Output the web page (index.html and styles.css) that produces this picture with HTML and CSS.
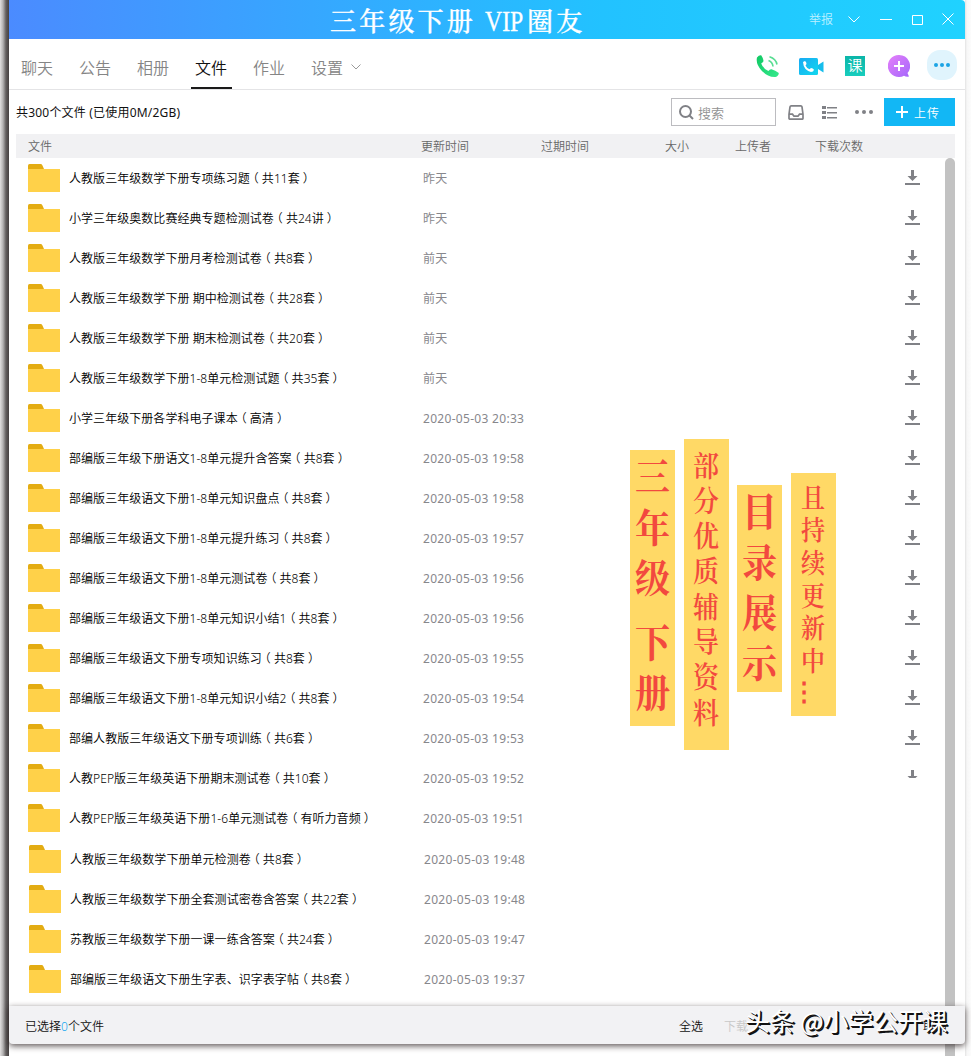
FILE: index.html
```html
<!DOCTYPE html>
<html lang="zh-CN">
<head>
    <meta charset="UTF-8">
    <meta name="viewport" content="width=device-width, initial-scale=1.0">
    <title>三年级下册 VIP圈友</title>
    <link rel="stylesheet" href="styles.css">
</head>
<body>
    <svg class="defs" width="0" height="0">
        <symbol id="folder" viewBox="0 0 32 28">
            <path fill="#e3ac13" d="M0 1.5Q0 0 1.5 0h11.2q1 0 1.5 1L16.500 6H0z"/>
            <path fill="#ffd149" d="M0 5h32v23H0z"/>
        </symbol>
        <symbol id="download" viewBox="0 0 15 15">
            <path fill="#808186" d="M6 0h3v6h3.500L7.500 11 2.500 6H6zM0 13h15v2H0z"/>
        </symbol>
    </svg>

    <div class="window">
        <header class="titlebar">
            <h1 class="title">三年级下册<span class="vip">VIP</span>圈友</h1>
            <div class="window-buttons">
                <span class="report">举报</span>
                <svg width="117" height="12" fill="none" stroke="#fff" stroke-width="1">
                    <path d="M.5 3.500l5.500 5.500 5.500-5.500M32 6.500h12M64.500 2.500h10v9h-10zM94.500 .500l11 11M105.500 .500l-11 11"/>
                </svg>
            </div>
        </header>

        <nav class="tabs">
            <span class="tab">聊天</span>
            <span class="tab">公告</span>
            <span class="tab">相册</span>
            <span class="tab active">文件</span>
            <span class="tab">作业</span>
            <span class="tab">设置
                <svg width="10" height="6" fill="none" stroke="#999"><path d="M.5 .5L5 5 9.500 .5"/></svg>
            </span>
            <div class="actions">
                <svg class="phone" width="24" height="24" viewBox="0 0 24 24">
                    <defs><linearGradient id="g1" x2="1" y2="1"><stop stop-color="#10c863"/><stop offset="1" stop-color="#35e98c"/></linearGradient></defs>
                    <path fill="url(#g1)" d="M1 3.500Q3 .8 5.200 1.200 7 3.500 7.500 7q-.2 1.200-2.300 2.500 2 5 7.200 7.500 1.600-2.200 3.100-1.800 3.800 1 7.300 3.800-.2 3-3.300 4Q12 23.500 5.500 16.500 -.5 10 1 3.500z"/>
                    <path fill="none" stroke="#58dd92" stroke-width="1.600" d="M12.500 6.500q4 1.500 4.500 6M13.500 2.700q6.500 2 7.500 7.800"/>
                </svg>
                <svg class="video" width="25" height="17" viewBox="0 0 25 17">
                    <defs><linearGradient id="g2" x2="1" y2="1"><stop stop-color="#18a9f3"/><stop offset="1" stop-color="#12d8ee"/></linearGradient></defs>
                    <rect width="19" height="17" rx="1.500" fill="url(#g2)"/>
                    <path fill="#16bdec" d="M19 7l5.500-3.500v11L19 11z"/>
                    <path fill="#fff" d="M4 4l2-1q1.500 1 1.500 3L6.500 7.500q1 2.500 4 3.700l1.500-1.200q2 .2 3 1.800-.5 2.200-3 2.200Q4.500 12 4 4z"/>
                </svg>
                <span class="lesson">课</span>
                <svg class="plus" width="22" height="22" viewBox="0 0 22 22">
                    <defs><linearGradient id="g3" x2="1" y2="1"><stop stop-color="#e580fa"/><stop offset="1" stop-color="#a466fb"/></linearGradient></defs>
                    <path fill="url(#g3)" d="M11 0a11 11 0 1 0 5 20.700Q18 22 21 21.500l-1.500-3.500A11 11 0 0 0 11 0z"/>
                    <path stroke="#fff" stroke-width="2" d="M6 11h10M11 6v10"/>
                </svg>
                <span class="more-round"><i></i><i></i><i></i></span>
            </div>
        </nav>

        <div class="toolbar">
            <span class="usage">共300个文件 (已使用0M/2GB)</span>
            <div class="search">
                <svg width="15" height="15" fill="none" stroke="#808186" stroke-width="2"><circle cx="6.500" cy="6.500" r="5.500"/><path d="M10.500 10.500l3.500 3.500"/></svg>
                <span>搜索</span>
            </div>
            <svg class="inbox" width="16" height="15" fill="none" stroke="#808186" stroke-width="1.700">
                <path d="M3.200 .9h9.600q1 0 1.200 1l1 7.300v4q0 1-1 1H2q-1 0-1-1v-4l1-7.300q.2-1 1.200-1zM1 9.200h3.500l1.500 2h4l1.500-2H15"/>
            </svg>
            <svg class="list-icon" width="16" height="13" fill="#808186">
                <path d="M0 0h4v3H0zM0 5h4v3H0zM0 10h4v3H0zM5 1h10v1.500H5zM5 6h10v1.500H5zM5 11h10v1.500H5z"/>
            </svg>
            <span class="more"><i></i><i></i><i></i></span>
            <button class="upload"><svg width="12" height="12" stroke="#fff" stroke-width="2"><path d="M0 6h12M6 0v12"/></svg><span>上传</span></button>
        </div>

        <div class="columns">
            <span>文件</span><span>更新时间</span><span>过期时间</span><span>大小</span><span>上传者</span><span>下载次数</span>
        </div>

        <div class="content">
            <ul class="files">
                <li><svg class="folder"><use href="#folder"/></svg><span class="name">人教版三年级数学下册专项练习题<b>（</b>共11套<b>）</b></span><span class="date">昨天</span><svg class="download"><use href="#download"/></svg></li>
                <li><svg class="folder"><use href="#folder"/></svg><span class="name">小学三年级奥数比赛经典专题检测试卷<b>（</b>共24讲<b>）</b></span><span class="date">昨天</span><svg class="download"><use href="#download"/></svg></li>
                <li><svg class="folder"><use href="#folder"/></svg><span class="name">人教版三年级数学下册月考检测试卷<b>（</b>共8套<b>）</b></span><span class="date">前天</span><svg class="download"><use href="#download"/></svg></li>
                <li><svg class="folder"><use href="#folder"/></svg><span class="name">人教版三年级数学下册 期中检测试卷<b>（</b>共28套<b>）</b></span><span class="date">前天</span><svg class="download"><use href="#download"/></svg></li>
                <li><svg class="folder"><use href="#folder"/></svg><span class="name">人教版三年级数学下册 期末检测试卷<b>（</b>共20套<b>）</b></span><span class="date">前天</span><svg class="download"><use href="#download"/></svg></li>
                <li><svg class="folder"><use href="#folder"/></svg><span class="name">人教版三年级数学下册1-8单元检测试题<b>（</b>共35套<b>）</b></span><span class="date">前天</span><svg class="download"><use href="#download"/></svg></li>
                <li><svg class="folder"><use href="#folder"/></svg><span class="name">小学三年级下册各学科电子课本<b>（</b>高清<b>）</b></span><span class="date">2020-05-03 20:33</span><svg class="download"><use href="#download"/></svg></li>
                <li><svg class="folder"><use href="#folder"/></svg><span class="name">部编版三年级下册语文1-8单元提升含答案<b>（</b>共8套<b>）</b></span><span class="date">2020-05-03 19:58</span><svg class="download"><use href="#download"/></svg></li>
                <li><svg class="folder"><use href="#folder"/></svg><span class="name">部编版三年级语文下册1-8单元知识盘点<b>（</b>共8套<b>）</b></span><span class="date">2020-05-03 19:58</span><svg class="download"><use href="#download"/></svg></li>
                <li><svg class="folder"><use href="#folder"/></svg><span class="name">部编版三年级语文下册1-8单元提升练习<b>（</b>共8套<b>）</b></span><span class="date">2020-05-03 19:57</span><svg class="download"><use href="#download"/></svg></li>
                <li><svg class="folder"><use href="#folder"/></svg><span class="name">部编版三年级语文下册1-8单元测试卷<b>（</b>共8套<b>）</b></span><span class="date">2020-05-03 19:56</span><svg class="download"><use href="#download"/></svg></li>
                <li><svg class="folder"><use href="#folder"/></svg><span class="name">部编版三年级语文下册1-8单元知识小结1<b>（</b>共8套<b>）</b></span><span class="date">2020-05-03 19:56</span><svg class="download"><use href="#download"/></svg></li>
                <li><svg class="folder"><use href="#folder"/></svg><span class="name">部编版三年级语文下册专项知识练习<b>（</b>共8套<b>）</b></span><span class="date">2020-05-03 19:55</span><svg class="download"><use href="#download"/></svg></li>
                <li><svg class="folder"><use href="#folder"/></svg><span class="name">部编版三年级语文下册1-8单元知识小结2<b>（</b>共8套<b>）</b></span><span class="date">2020-05-03 19:54</span><svg class="download"><use href="#download"/></svg></li>
                <li><svg class="folder"><use href="#folder"/></svg><span class="name">部编人教版三年级语文下册专项训练<b>（</b>共6套<b>）</b></span><span class="date">2020-05-03 19:53</span><svg class="download"><use href="#download"/></svg></li>
                <li><svg class="folder"><use href="#folder"/></svg><span class="name">人教PEP版三年级英语下册期末测试卷<b>（</b>共10套<b>）</b></span><span class="date">2020-05-03 19:52</span><svg class="download clipped"><use href="#download"/></svg></li>
                <li><svg class="folder"><use href="#folder"/></svg><span class="name">人教PEP版三年级英语下册1-6单元测试卷<b>（</b>有听力音频<b>）</b></span><span class="date">2020-05-03 19:51</span></li>
                <li class="shifted first"><svg class="folder"><use href="#folder"/></svg><span class="name">人教版三年级数学下册单元检测卷<b>（</b>共8套<b>）</b></span><span class="date">2020-05-03 19:48</span></li>
                <li class="shifted"><svg class="folder"><use href="#folder"/></svg><span class="name">人教版三年级数学下册全套测试密卷含答案<b>（</b>共22套<b>）</b></span><span class="date">2020-05-03 19:48</span></li>
                <li class="shifted"><svg class="folder"><use href="#folder"/></svg><span class="name">苏教版三年级数学下册一课一练含答案<b>（</b>共24套<b>）</b></span><span class="date">2020-05-03 19:47</span></li>
                <li class="shifted"><svg class="folder"><use href="#folder"/></svg><span class="name">部编版三年级语文下册生字表、识字表字帖<b>（</b>共8套<b>）</b></span><span class="date">2020-05-03 19:37</span></li>
            </ul>
            <div class="scrollbar"></div>
        </div>

        <footer class="statusbar">
            <span>已选择<em>0</em>个文件</span>
            <span class="select-all">全选</span>
            <span class="disabled">下载</span>
            <span class="cancel">取消</span>
        </footer>
    </div>

    <div class="banner banner-grade"><span>三年级<i></i>下册</span></div>
    <div class="banner banner-part"><span>部分优质辅导资料</span></div>
    <div class="banner banner-list"><span>目录展示</span></div>
    <div class="banner banner-update"><span>且持续更新中</span><span class="dots">⋮</span></div>

    <div class="watermark">头条 <span>@</span>小学公开课</div>
</body>
</html>
```
FILE: styles.css
```css
* {
    box-sizing: border-box;
}
body {
    position: relative;
    margin: 0;
    padding-left: 9px;
    width: 971px;
    height: 1056px;
    overflow: hidden;
    background: linear-gradient(to right, #e2e0e0 0, #b3b1b1 3px, #625e5e 6px, #464141 9px, #fff 9px, #fff 965px, #e3e3e3 965px, #f7f7f7 967px, #fcfcfc 971px);
    font-family: "Noto Sans", "Noto Sans CJK SC", sans-serif;
    font-size: 12px;
    font-weight: 350;
    color: #111;
}
svg {
    display: block;
    flex: none;
}
.defs {
    position: absolute;
}
.window {
    position: relative;
    display: flex;
    flex-direction: column;
    width: 956px;
    height: 1056px;
}

/* title bar */
.titlebar {
    display: flex;
    justify-content: space-between;
    flex: none;
    height: 39px;
    padding-left: 321px;
    background: linear-gradient(to right, #4b8bff, #22c2ff 62%, #20d2ff);
    border-top-right-radius: 4px;
    color: #fff;
}
.title {
    margin: 0;
    font-family: "Liberation Serif", "Noto Serif CJK SC", "Noto Sans CJK SC", serif;
    font-size: 26px;
    font-weight: 500;
    letter-spacing: 3.200px;
    line-height: 43px;
    white-space: nowrap;
    -webkit-text-stroke: .3px #fff;
}
.vip {
    display: inline-block;
    width: 42px;
    margin-left: 9px;
    font-weight: 400;
    font-size: 29px;
    letter-spacing: 0;
    transform: scaleX(.82);
    transform-origin: left;
}
.window-buttons {
    display: flex;
    align-items: center;
    height: 37px;
}
.report {
    margin-right: 15px;
    color: #bdf0ff;
}

/* tabs */
.tabs {
    display: flex;
    flex: none;
    height: 51px;
    padding-left: 12px;
    border-bottom: 1px solid #e4e4e6;
}
.tab {
    display: flex;
    align-items: center;
    gap: 8px;
    height: 50px;
    margin-right: 26px;
    padding-top: 5px;
    font-size: 16px;
    color: #858585;
}
.tab.active {
    margin: 0 21px 0 -6px;
    padding: 7px 5px 0 4px;
    border-bottom: 2px solid #1a1a1a;
    color: #111;
}
.tab:nth-child(3) {
    margin-right: 28px;
}
.actions {
    display: flex;
    align-items: center;
    margin-left: auto;
    padding-right: 8px;
    height: 54px;
}
.video {
    margin-left: 19px;
}
.lesson {
    width: 20px;
    height: 20px;
    margin-left: 21px;
    background: linear-gradient(#0bb5a8, #18cdbd);
    color: #fff;
    font-size: 15px;
    line-height: 19px;
    text-align: center;
}
.plus {
    margin-left: 23px;
}
.more-round {
    display: flex;
    align-items: center;
    justify-content: center;
    gap: 2px;
    width: 30px;
    height: 30px;
    margin: -2px 0 0 17px;
    border-radius: 13px;
    background: #e0f4fd;
}
.more-round i,
.more i {
    width: 4px;
    height: 4px;
    border-radius: 50%;
    background: #1ca3e4;
}

/* toolbar */
.toolbar {
    display: flex;
    align-items: center;
    flex: none;
    height: 44px;
    padding: 0 10px 0 7px;
}
.usage {
    margin-right: auto;
    font-weight: 400;
    letter-spacing: .2px;
}
.search {
    display: flex;
    align-items: center;
    gap: 4px;
    width: 105px;
    height: 28px;
    padding-left: 7px;
    border: 1px solid #bcbcc0;
    font-size: 13px;
    color: #929292;
}
.inbox {
    margin-left: 12px;
}
.list-icon {
    margin-left: 18px;
}
.more {
    display: flex;
    gap: 3px;
    margin: 0 11px 0 17px;
}
.more i {
    background: #808186;
}
.upload {
    display: flex;
    align-items: center;
    gap: 6px;
    width: 71px;
    height: 28px;
    padding: 0 0 0 12px;
    border: 0;
    background: #12b7f5;
    color: #fff;
    font: inherit;
    letter-spacing: 1px;
}
.upload span {
    padding-top: 2px;
}

/* file table */
.columns {
    display: grid;
    grid-template-columns: 393px 120px 124px 70px 80px 1fr;
    flex: none;
    height: 24px;
    margin: 0 10px 0 7px;
    padding-left: 12px;
    background: #f1f1f3;
    line-height: 25px;
    color: #686868;
}
.content {
    display: flex;
    flex: 1;
    min-height: 0;
    padding-right: 10px;
}
.files {
    flex: 1;
    margin: 0;
    padding: 0 25px 0 19px;
    list-style: none;
}
.files li {
    display: flex;
    align-items: center;
    height: 40px;
    line-height: 40px;
}
.files .shifted {
    padding-left: 1px;
}
.files .first {
    margin-top: 1px;
}
.folder {
    width: 32px;
    height: 28px;
    margin-right: 9px;
}
.name {
    width: 354px;
    padding-top: 1px;
    letter-spacing: .050px;
    white-space: nowrap;
    color: #000;
}
/* half-width round brackets, centred in a full cell */
.name b {
    margin: 0 3px;
    font-family: "Noto Sans CJK SC", sans-serif;
    font-weight: inherit;
    font-feature-settings: "halt";
    line-height: 1;
}
.date {
    padding-top: 2px;
    color: #87878c;
    font-weight: 400;
    letter-spacing: .3px;
}
.download {
    width: 15px;
    height: 15px;
    margin: -1px 0 0 auto;
}
.clipped {
    clip-path: inset(0 0 7px 0);
}
.scrollbar {
    width: 10px;
    border-radius: 5px 5px 0 0;
    background: #c2c2c2;
}

/* bottom bar lies over the list */
.statusbar {
    position: absolute;
    left: 0;
    bottom: 12px;
    display: flex;
    align-items: center;
    width: 956px;
    height: 38px;
    padding: 2px 18px 0 16px;
    border-radius: 0 0 4px 4px;
    background: #f2f2f4;
    box-shadow: 0 2px 6px rgba(40, 30, 30, .75);
}
.statusbar em {
    font-style: normal;
    color: #12a8f0;
}
.select-all {
    margin-left: auto;
}
.disabled {
    margin-left: 21px;
    color: #c8c8c8;
}
.cancel {
    margin-left: 175px;
}

/* vertical captions */
.banner {
    position: absolute;
    display: flex;
    flex-direction: column;
    align-items: center;
    width: 45px;
    padding-right: 1px;
    background: #ffd966;
    color: #f2493f;
    font-family: "Noto Serif CJK SC", "Noto Sans CJK SC", serif;
    font-weight: 700;
}
.banner span {
    writing-mode: vertical-rl;
    line-height: 45px;
    transform: scaleY(1.12);
    transform-origin: top;
    white-space: nowrap;
}
.banner-grade {
    left: 630px;
    top: 450px;
    height: 276px;
    padding-top: 7px;
    font-size: 35px;
    letter-spacing: 9.700px;
}
.banner-grade i {
    display: inline-block;
    height: 14px;
}
.banner-part {
    left: 684px;
    top: 439px;
    height: 311px;
    padding-top: 12px;
    font-size: 26px;
    font-weight: 600;
    letter-spacing: 5.500px;
}
.banner-list {
    left: 737px;
    top: 485px;
    height: 207px;
    padding-top: 7px;
    font-size: 35px;
    letter-spacing: 9.900px;
}
.banner-update {
    left: 791px;
    top: 473px;
    height: 243px;
    padding-top: 11px;
    font-size: 24px;
    font-weight: 600;
    letter-spacing: 5.200px;
}
.banner .dots {
    align-self: flex-start;
    writing-mode: horizontal-tb;
    margin-top: 14px;
    padding-left: 1px;
    line-height: 30px;
}

.watermark {
    position: absolute;
    left: 745px;
    top: 1003px;
    font-family: "Noto Sans CJK SC", sans-serif;
    font-size: 24.800px;
    font-weight: 400;
    line-height: 34px;
    white-space: nowrap;
    color: #fff;
    text-shadow: 1px 1px 0 #111, 2px 2px 0 #111;
}
```
